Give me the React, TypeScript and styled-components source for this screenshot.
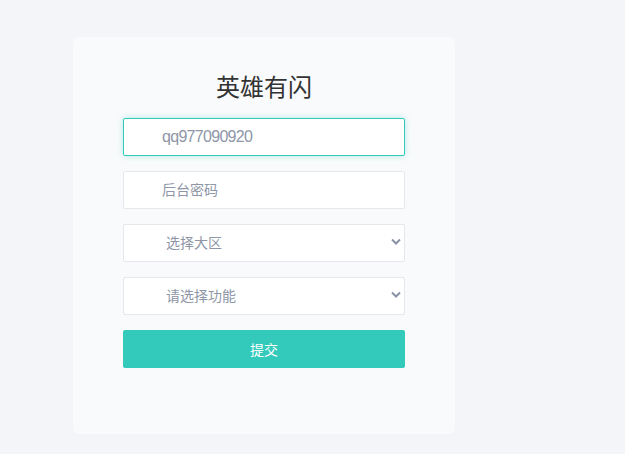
import styled, { createGlobalStyle, css } from 'styled-components';

const GlobalStyle = createGlobalStyle`
  html, body {
    margin: 0;
    padding: 0;
    background: #f4f5f9;
    font-family: "Liberation Sans", "Noto Sans CJK SC", sans-serif;
  }
`;

const Page = styled.div`
  min-height: 454px;
  padding: 37px 0 0 73px;
  box-sizing: border-box;
`;

const Card = styled.form`
  width: 382px;
  box-sizing: border-box;
  padding: 31px 50px 66px;
  background: #f9fafc;
  border-radius: 6px;
  display: flex;
  flex-direction: column;
  gap: 15px;
`;

const Title = styled.h1`
  margin: 0 0 -1px;
  font-family: "Noto Sans CJK SC", sans-serif;
  font-size: 24px;
  font-weight: 400;
  line-height: 36px;
  color: #333;
  text-align: center;
`;

const fieldBase = css`
  width: 100%;
  height: 38px;
  box-sizing: border-box;
  border: 1px solid #e6e7eb;
  border-radius: 2px;
  background: #fff;
  font-family: "Liberation Sans", "Noto Sans CJK SC", sans-serif;
  font-size: 14px;
  color: #8e96a7;
  outline: none;
`;

const TextInput = styled.input<{ $active?: boolean }>`
  ${fieldBase}
  padding: 0 38px;
  &::placeholder {
    color: #8e96a7;
  }
  ${p => p.$active && css`
    font-size: 16px;
    letter-spacing: -0.7px;
    border-color: #33cabb;
    box-shadow: 0 0 6px rgba(51, 202, 187, 0.35);
    caret-color: #555;
  `}
`;

const SelectWrap = styled.div`
  position: relative;
`;

const Select = styled.select`
  ${fieldBase}
  appearance: none;
  padding: 0 38px 0 42px;
`;

const Chevron = styled.svg`
  position: absolute;
  right: 4px;
  top: 14px;
  pointer-events: none;
`;

const SubmitButton = styled.button`
  height: 38px;
  border: none;
  border-radius: 2px;
  background: #33cabb;
  color: #fff;
  font-family: "Noto Sans CJK SC", sans-serif;
  font-size: 14px;
  cursor: pointer;
`;

const Arrow = () => (
  <Chevron width="10" height="8" viewBox="0 0 10 8">
    <path d="M1 1.5 L5 5.5 L9 1.5" fill="none" stroke="#8a93a5" strokeWidth="2" />
  </Chevron>
);

const App = () => {
  return (
    <>
      <GlobalStyle />
      <Page>
        <Card onSubmit={e => e.preventDefault()}>
          <Title>英雄有闪</Title>
          <TextInput $active defaultValue="qq977090920" spellCheck={false} />
          <TextInput type="password" placeholder="后台密码" />
          <SelectWrap>
            <Select defaultValue="">
              <option value="">选择大区</option>
            </Select>
            <Arrow />
          </SelectWrap>
          <SelectWrap>
            <Select defaultValue="">
              <option value="">请选择功能</option>
            </Select>
            <Arrow />
          </SelectWrap>
          <SubmitButton type="submit">提交</SubmitButton>
        </Card>
      </Page>
    </>
  );
};

export default App;
